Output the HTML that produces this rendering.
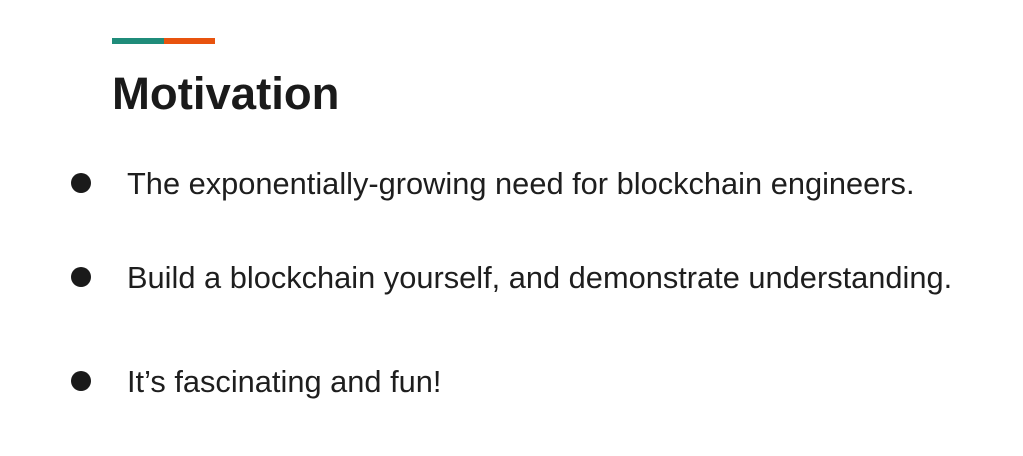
<!DOCTYPE html>
<html><head><style>
html,body{margin:0;padding:0;background:#fff;width:1023px;height:456px;overflow:hidden;position:relative;font-family:"Liberation Sans",sans-serif;color:#1e1e1e}
.bar{position:absolute;top:38px;height:6px}
h1{position:absolute;left:112px;top:66px;margin:0;font-size:45.5px;font-weight:bold;line-height:56px;color:#1a1a1a}
.li{position:absolute;left:127px;font-size:30.8px;line-height:36px;white-space:nowrap}
.dot{position:absolute;left:71px;width:20px;height:20px;border-radius:50%;background:#1a1a1a}
</style></head><body>
<div class="bar" style="left:112px;width:52px;background:#1f8c7a"></div>
<div class="bar" style="left:164px;width:51px;background:#e8530e"></div>
<h1>Motivation</h1>
<div class="dot" style="top:173px"></div>
<div class="li" style="top:166px">The exponentially-growing need for blockchain engineers.</div>
<div class="dot" style="top:267px"></div>
<div class="li" style="top:260px">Build a blockchain yourself, and demonstrate understanding.</div>
<div class="dot" style="top:371px"></div>
<div class="li" style="top:364px">It’s fascinating and fun!</div>
</body></html>
